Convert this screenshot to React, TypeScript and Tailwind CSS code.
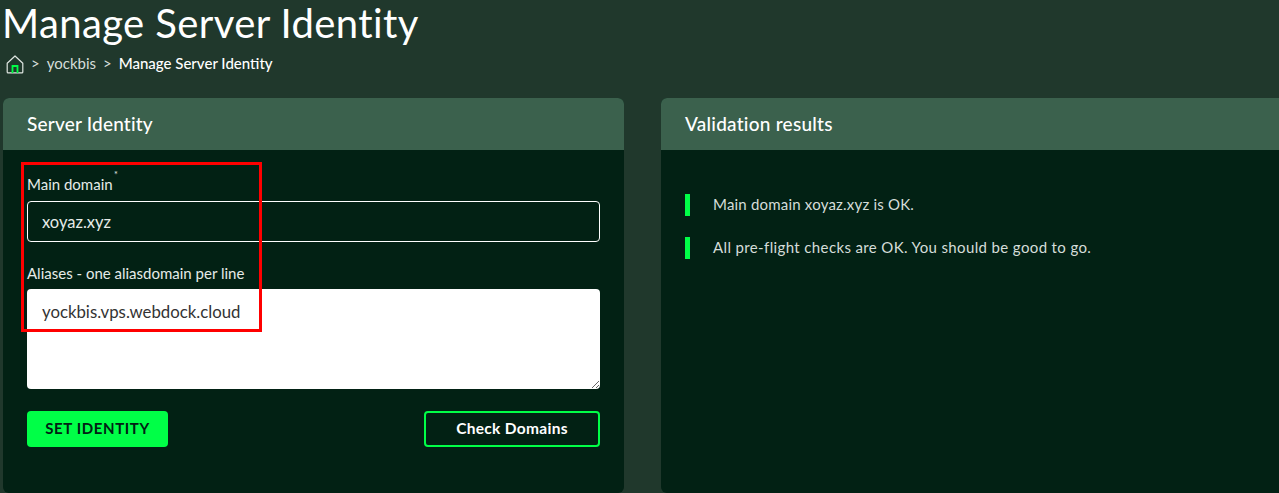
import { useState } from "react";

function HomeIcon() {
  return (
    <svg width="18" height="19" viewBox="0 0 18 19" fill="none" className="block">
      <path d="M1.2 8.2 9 1l7.8 7.2V17a.9.9 0 0 1-.9.9H2.1a.9.9 0 0 1-.9-.9z" stroke="#dfe6e2" strokeWidth="1.2" strokeLinejoin="round" />
      <path d="M6.5 18V11h5V18" stroke="#00ff47" strokeWidth="1.8" />
    </svg>
  );
}

function Result({ text, className }: { text: string; className: string }) {
  return (
    <div className="flex items-center h-[22px]">
      <div className="w-[5px] h-[22px] bg-[#00ff47]" />
      <p className={`ml-[23px] -mt-[2px] text-[15px] text-[#d5ddd9] ${className}`}>{text}</p>
    </div>
  );
}

export default function App() {
  const [domain, setDomain] = useState("xoyaz.xyz");
  const [aliases, setAliases] = useState("yockbis.vps.webdock.cloud");

  return (
    <div className="relative h-[493px] overflow-hidden bg-[#20382c] text-white font-['Lato','Open_Sans',sans-serif]">
      <div className="pl-[3px]">
        <h1 className="-ml-px text-[40px] leading-[46px] tracking-[0.4px] font-normal">Manage Server Identity</h1>
        <div className="flex items-center h-[20px] mt-[8px] pl-[3px] text-[15px]">
          <HomeIcon />
          <div className="flex items-center -mt-[2px]">
            <span className="ml-[7px] text-[#d5ddd9]">&gt;</span>
            <span className="ml-[7px] text-[#d5ddd9]">yockbis</span>
            <span className="ml-[7px] text-[#d5ddd9]">&gt;</span>
            <span className="ml-[7px] font-medium">Manage Server Identity</span>
          </div>
        </div>

        <div className="flex gap-[37px] mt-[24px] w-[1284px]">
          <section className="w-[621px] h-[395px] shrink-0 rounded-[6px] overflow-hidden bg-[#022114]">
            <div className="h-[52px] flex items-center px-[24px] bg-[#3b614d] text-[19px] tracking-[0.2px] font-medium">Server Identity</div>
            <div className="px-[24px] pt-[24px]">
              <label className="relative block text-[15px] leading-[20px] text-[#e6ebe8]">
                Main domain
                {/* required marker sits well above the label */}
                <span className="absolute left-[87px] -top-[5px] text-[9px] leading-[12px]">*</span>
              </label>
              <input
                value={domain}
                onChange={(e) => setDomain(e.target.value)}
                className="block w-[573px] h-[41px] mt-[7px] px-[14px] bg-transparent border border-white rounded-[4px] text-[16.5px] text-[#e6ebe8] outline-none"
              />
              <label className="block mt-[21px] text-[15px] leading-[20px] text-[#e6ebe8]">
                Aliases - one aliasdomain per line
              </label>
              <textarea
                value={aliases}
                onChange={(e) => setAliases(e.target.value)}
                className="block w-[573px] h-[100px] mt-[6px] px-[15px] py-[11px] bg-white rounded-[4px] text-[16.8px] leading-[24px] text-[#333] outline-none"
              />
              <div className="flex justify-between mt-[22px]">
                <button className="w-[141px] h-[36px] pb-[2px] rounded-[4px] bg-[#00ff47] text-[#022114] text-[15px] font-bold tracking-[0.6px]">
                  SET IDENTITY
                </button>
                <button className="w-[176px] h-[36px] rounded-[4px] border-2 border-[#00ff47] text-[15.5px] tracking-[0.3px] font-bold">
                  Check Domains
                </button>
              </div>
            </div>
          </section>

          <section className="flex-1 h-[395px] rounded-[6px] overflow-hidden bg-[#022114]">
            <div className="h-[52px] flex items-center px-[24px] bg-[#3b614d] text-[19px] tracking-[0.25px] font-medium">Validation results</div>
            <div className="px-[24px] pt-[44px] flex flex-col gap-[21px]">
              <Result text="Main domain xoyaz.xyz is OK." className="tracking-[0.2px]" />
              <Result text="All pre-flight checks are OK. You should be good to go." className="tracking-[0.37px]" />
            </div>
          </section>
        </div>
      </div>

      {/* red annotation box drawn over the form */}
      <div className="absolute left-[21px] top-[162px] w-[241px] h-[170px] border-[3px] border-[#ff0000] pointer-events-none" />
    </div>
  );
}
